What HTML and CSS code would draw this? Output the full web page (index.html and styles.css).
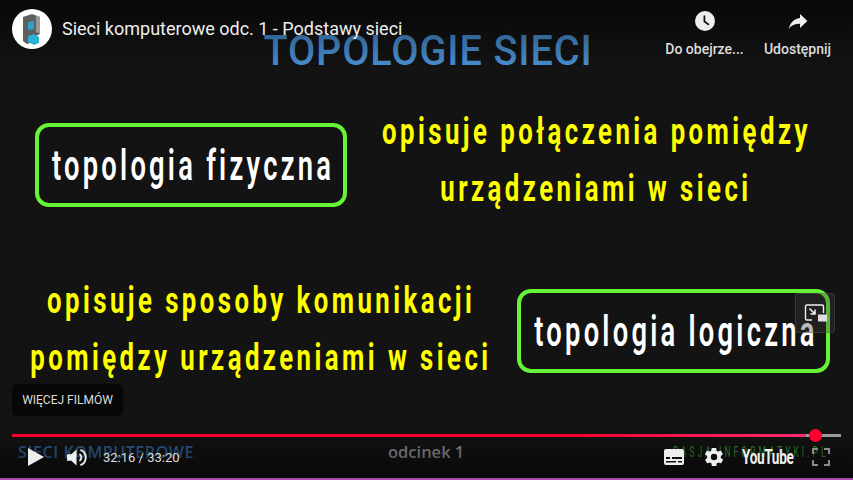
FILE: index.html
```html
<!DOCTYPE html>
<html>
<head>
    <meta name="viewport" content="width=device-width, initial-scale=1">
    <title>Sieci komputerowe odc. 1 - Podstawy sieci</title>
    <link rel="stylesheet" href="styles.css">
</head>
<body>
    <div class="player">
        <!-- klatka filmu -->
        <div class="slide">
            <div class="slide-title">TOPOLOGIE SIECI</div>
            <div class="box box-fizyczna"><span class="condensed">topologia fizyczna</span></div>
            <div class="desc desc-fizyczna">
                <span class="condensed">opisuje połączenia pomiędzy</span>
                <span class="condensed">urządzeniami w sieci</span>
            </div>
            <div class="desc desc-logiczna">
                <span class="condensed">opisuje sposoby komunikacji</span>
                <span class="condensed">pomiędzy urządzeniami w sieci</span>
            </div>
            <div class="box box-logiczna"><span class="condensed">topologia logiczna</span></div>
            <div class="foot foot-series">SIECI KOMPUTEROWE</div>
            <div class="foot foot-episode">odcinek 1</div>
            <div class="foot foot-brand">PASJA INFORMATYKI.PL</div>
        </div>

        <!-- nakladka youtube -->
        <div class="top-shade"></div>
        <div class="bottom-shade"></div>

        <div class="top-bar">
            <div class="channel">
                <svg viewBox="0 0 40 40" width="40" height="40">
                    <circle cx="20" cy="20" r="20" fill="#fff"/>
                    <path d="M11 8 L20 5 L28 8 L28 25 L24 27 L24 32 L15 35 L11 32 Z" fill="#5f5f5f"/>
                    <path d="M20 5 L28 8 L28 25 L24 23 L24 7 Z" fill="#9a9a9a"/>
                    <path d="M16 13 L22 12 L22 20 L16 21 Z" fill="#29a3c9"/>
                    <path d="M16 27 L22 25 L27 28 L27 34 L22 36 L16 33 Z" fill="#2bb1d6"/>
                </svg>
            </div>
            <div class="video-title">Sieci komputerowe odc. 1 - Podstawy sieci</div>
            <div class="actions">
                <div class="action">
                    <svg viewBox="0 0 24 24" width="24" height="24">
                        <path fill="#eee" d="M12 2a10 10 0 1 0 0 20 10 10 0 0 0 0-20z"/>
                        <path fill="none" stroke="#111" stroke-width="1.7" d="M11.4 6.500v6l4.600 3.200"/>
                    </svg>
                    <span>Do obejrze...</span>
                </div>
                <div class="action">
                    <svg viewBox="0 0 24 24" width="24" height="24">
                        <path fill="#eee" d="M14 5v4C7 10 4 15 2.600 20c2.600-3.600 6.200-5.200 11.400-5.200V19l7.400-7z"/>
                    </svg>
                    <span>Udostępnij</span>
                </div>
            </div>
        </div>

        <div class="more-videos">WIĘCEJ FILMÓW</div>

        <div class="miniplayer">
            <svg viewBox="0 0 24 24" width="24" height="24">
                <path fill="none" stroke="#eee" stroke-width="1.4" d="M9 19H4a1.500 1.500 0 0 1-1.500-1.500v-12A1.500 1.500 0 0 1 4 4h15a1.500 1.500 0 0 1 1.500 1.500V12"/>
                <path fill="none" stroke="#eee" stroke-width="1.600" d="M6.500 7.500l5 5M12 8.500v4.500H7.500"/>
                <rect x="15" y="13.500" width="9" height="7" fill="#ddd"/>
            </svg>
        </div>

        <div class="controls">
            <div class="progress">
                <div class="progress-played" style="width: 95.8%"></div>
                <div class="progress-thumb"></div>
            </div>
            <div class="buttons">
                <svg class="btn btn-play" viewBox="0 0 16 18" width="16" height="18">
                    <path fill="#eee" d="M0 0L16 9L0 18Z"/>
                </svg>
                <svg class="btn btn-volume" viewBox="0 0 22 22" width="21" height="21">
                    <path fill="#eee" d="M0 7.500h4.500L10 2.500v17l-5.500-5H0z"/>
                    <path fill="none" stroke="#eee" stroke-width="2" d="M13 7.500a4 4 0 0 1 0 7M14 3a8.500 8.500 0 0 1 0 16"/>
                </svg>
                <div class="time">32:16 / 33:20</div>
                <div class="spacer"></div>
                <svg class="btn" viewBox="0 0 20 16" width="20" height="16">
                    <path fill="#eee" fill-rule="evenodd" d="M2 0h16a2 2 0 0 1 2 2v12a2 2 0 0 1-2 2H2a2 2 0 0 1-2-2V2a2 2 0 0 1 2-2zM2 8v2h4V8zM8 8v2h10V8zM2 12v1.500h10V12zM14 12v1.500h4V12z"/>
                </svg>
                <svg class="btn btn-gear" viewBox="0 0 24 24" width="22" height="22">
                    <path fill="#eee" d="M19.400 13c.1-.3.1-.7.1-1s0-.7-.1-1l2.100-1.600c.2-.2.2-.4.100-.6l-2-3.500c-.1-.2-.4-.3-.6-.2l-2.500 1c-.5-.4-1.100-.7-1.700-1l-.4-2.600c0-.3-.2-.4-.5-.4h-4c-.3 0-.5.100-.5.400l-.4 2.600c-.6.3-1.200.6-1.700 1l-2.500-1c-.2-.1-.5 0-.6.2l-2 3.500c-.1.200-.1.400.1.600L4.600 11c-.1.300-.1.700-.1 1s0 .7.100 1l-2.100 1.600c-.2.200-.2.400-.1.600l2 3.500c.1.200.4.300.6.200l2.500-1c.5.400 1.100.700 1.700 1l.4 2.600c0 .3.200.4.500.4h4c.3 0 .5-.1.500-.4l.4-2.600c.6-.3 1.200-.6 1.700-1l2.500 1c.2.100.5 0 .6-.2l2-3.500c.1-.2.1-.4-.1-.6zM12 15.500a3.500 3.500 0 1 1 0-7 3.500 3.500 0 0 1 0 7z"/>
                </svg>
                <div class="yt-logo">YouTube</div>
                <svg class="btn btn-full" viewBox="0 0 18 18" width="18" height="18">
                    <path fill="none" stroke="#8a8a8a" stroke-width="2" d="M1 6V1h5M12 1h5v5M17 12v5h-5M6 17H1v-5"/>
                </svg>
            </div>
        </div>
        <div class="bottom-line"></div>
    </div>
</body>
</html>
```

FILE: styles.css
```css
* {
    box-sizing: border-box;
}

body {
    margin: 0;
    background-color: #000;
    font-family: Roboto, Arial, sans-serif;
}

.player {
    position: relative;
    width: 853px;
    height: 480px;
    overflow: hidden;
    background-color: #131313;
}

.slide {
    position: absolute;
    left: 0;
    top: 0;
    width: 853px;
    height: 480px;
}

.slide-title {
    position: absolute;
    left: 0;
    top: 27px;
    width: 856px;
    text-align: center;
    font-weight: 500;
    font-size: 42px;
    line-height: 48px;
    letter-spacing: 1px;
    color: #4a90d4;
    transform: scaleX(.94);
}

/* brak fontu waskiego, wiec sciskam zwykly */
.condensed {
    flex: none;
    white-space: nowrap;
    font-weight: 700;
}

.box {
    position: absolute;
    display: flex;
    align-items: center;
    justify-content: center;
    border: 4px solid #66f536;
    border-radius: 14px;
    color: #fff;
    font-size: 42px;
    letter-spacing: 5px;
}

.box .condensed {
    font-weight: 600;
    transform: scaleX(.65);
}

.box-fizyczna {
    left: 35px;
    top: 123px;
    width: 312px;
    height: 84px;
    padding-left: 4px;
}

.box-logiczna {
    left: 517px;
    top: 289px;
    width: 313px;
    height: 84px;
    padding-left: 4px;
}

.desc {
    position: absolute;
    display: flex;
    flex-direction: column;
    align-items: center;
    gap: 14px;
    color: #ffff00;
    font-size: 37px;
    line-height: 43px;
    letter-spacing: 5px;
}

.desc .condensed {
    transform: scaleX(.695);
}

.desc-fizyczna {
    left: 370px;
    top: 110px;
    width: 452px;
}

.desc-logiczna {
    left: 11px;
    top: 279px;
    width: 500px;
}

.foot {
    position: absolute;
    white-space: nowrap;
}

.foot-series {
    left: 18px;
    top: 442px;
    font-family: "Open Sans", sans-serif;
    font-weight: 600;
    font-size: 16px;
    line-height: 20px;
    letter-spacing: .6px;
    color: #2d5f8f;
}

.foot-episode {
    left: 388px;
    top: 441px;
    font-family: "Open Sans", sans-serif;
    font-weight: 600;
    font-size: 16.5px;
    line-height: 22px;
    color: #8f8f8f;
}

.foot-brand {
    left: 673px;
    top: 444px;
    font-size: 14px;
    line-height: 16px;
    letter-spacing: 5.2px;
    color: #35902a;
    transform: scaleX(.6);
    transform-origin: left;
}

.top-shade {
    position: absolute;
    left: 0;
    top: 0;
    width: 100%;
    height: 70px;
    background: linear-gradient(#000, rgba(0, 0, 0, 0));
    opacity: .6;
}

.bottom-shade {
    position: absolute;
    left: 0;
    bottom: 0;
    width: 100%;
    height: 50px;
    background: linear-gradient(rgba(0, 0, 0, 0), #000);
    opacity: .6;
}

.top-bar {
    position: absolute;
    left: 12px;
    right: 12px;
    top: 9px;
    display: flex;
    align-items: flex-start;
}

.channel {
    width: 40px;
    height: 40px;
    flex: none;
}

.video-title {
    flex: 1;
    margin-left: 10px;
    font-size: 18px;
    line-height: 40px;
    color: #eee;
}

.actions {
    display: flex;
    gap: 6px;
}

.action {
    width: 87px;
    display: flex;
    flex-direction: column;
    align-items: center;
    gap: 8px;
    font-size: 14px;
    font-weight: 500;
    line-height: 16px;
    color: #ddd;
}

.more-videos {
    position: absolute;
    left: 12px;
    top: 384px;
    width: 111px;
    height: 32px;
    background-color: #070707;
    border-radius: 5px;
    font-size: 12px;
    line-height: 32px;
    text-align: center;
    color: #ddd;
}

.miniplayer {
    position: absolute;
    left: 795px;
    top: 293px;
    width: 40px;
    height: 40px;
    display: flex;
    align-items: center;
    justify-content: center;
    background-color: rgba(60, 60, 60, .35);
    border: 1px solid rgba(90, 90, 90, .4);
    border-radius: 4px;
}

.controls {
    position: absolute;
    left: 12px;
    right: 12px;
    top: 434px;
}

.progress {
    position: relative;
    height: 3px;
    background-color: #9a9a9a;
}

.progress-played {
    height: 100%;
    background: linear-gradient(to right, #f5002d 70%, #ff2a70);
}

.progress-thumb {
    position: absolute;
    left: 797px;
    top: -5px;
    width: 13px;
    height: 13px;
    border-radius: 50%;
    background-color: #ff0033;
}

.buttons {
    display: flex;
    align-items: center;
    height: 22px;
    margin-top: 9px;
    padding-right: 11px;
}

.btn {
    flex: none;
}

.btn-play {
    margin-left: 16px;
}

.btn-volume {
    margin-left: 23px;
}

.time {
    margin-left: 15px;
    font-size: 13px;
    color: #ddd;
}

.spacer {
    flex: 1;
}

.btn-gear {
    margin-left: 19px;
}

.yt-logo {
    width: 52px;
    margin-left: 17px;
    white-space: nowrap;
    font-weight: 700;
    font-size: 20px;
    letter-spacing: -0.5px;
    color: #f0f0f0;
    transform: scaleX(.68);
    transform-origin: left;
}

.btn-full {
    margin-left: 18px;
}

.bottom-line {
    position: absolute;
    left: 0;
    bottom: 0;
    width: 100%;
    height: 2px;
    background-color: #a84db0;
}
```
